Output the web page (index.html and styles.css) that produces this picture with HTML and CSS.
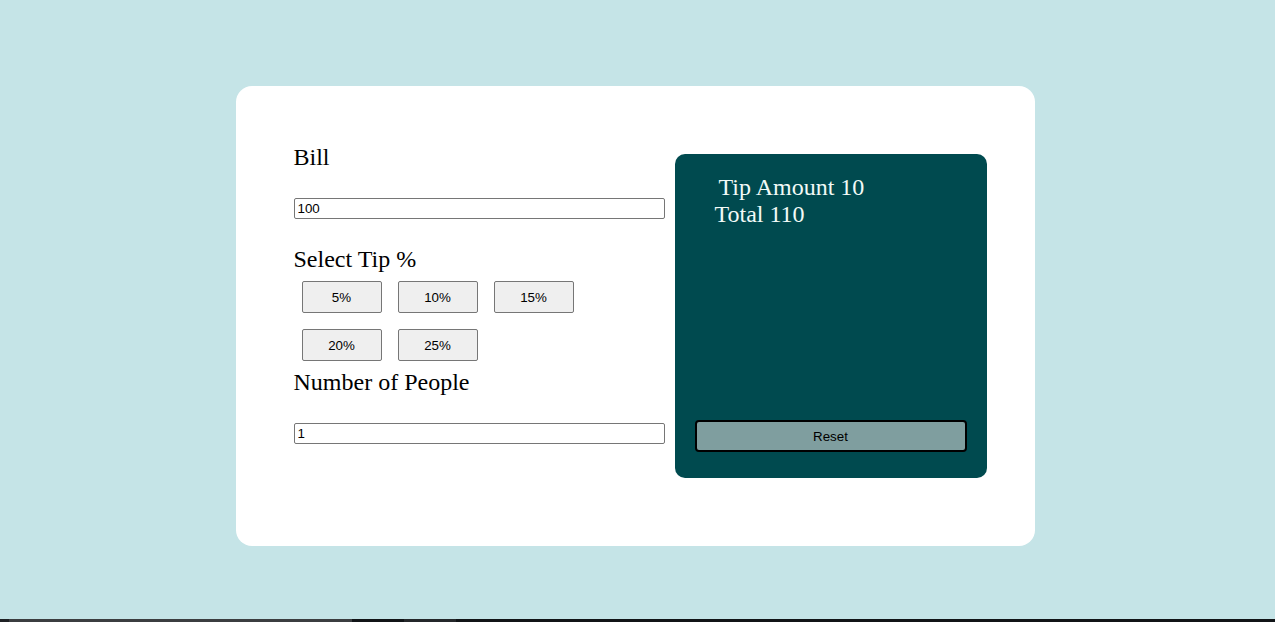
FILE: index.html
```html
<!DOCTYPE html>
<html lang="en">
<head>
<meta charset="utf-8">
<title>Tip Calculator</title>
<link rel="stylesheet" href="styles.css">
</head>
<body>
<div class="page">
  <main class="card">
    <section class="inputs">
      <label class="label" for="bill">Bill</label>
      <input class="field field-bill" id="bill" type="text" value="100">
      <div class="label">Select Tip %</div>
      <div class="tips">
        <button class="tip">5%</button><button class="tip">10%</button><button class="tip">15%</button><br>
        <button class="tip">20%</button><button class="tip">25%</button>
      </div>
      <label class="label" for="people">Number of People</label>
      <input class="field field-people" id="people" type="text" value="1">
    </section>
    <section class="panel">
      <div class="results">
        <div class="row row-tip">Tip Amount 10</div>
        <div class="row">Total 110</div>
      </div>
      <button class="reset">Reset</button>
    </section>
  </main>
</div>
<div class="taskbar"><span class="tb-a"></span><span class="tb-b"></span><span class="tb-c"></span></div>
</body>
</html>
```

FILE: styles.css
```css
html, body {
  margin: 0;
  padding: 0;
}
body {
  background: #c5e4e7;
  font-family: "Liberation Serif", "Times New Roman", serif;
  height: 622px;
  overflow: hidden;
}
.page {
  display: flex;
  justify-content: center;
  padding: 86px 5px 0 0;
}
.card {
  width: 799px;
  height: 460px;
  box-sizing: border-box;
  background: #ffffff;
  border-radius: 16px;
  padding: 58px 48px 0 58px;
  display: flex;
  align-items: flex-start;
  gap: 10px;
}
.inputs {
  width: 371px;
  display: flex;
  flex-direction: column;
  align-items: flex-start;
}
.label {
  display: block;
  font-size: 24px;
  line-height: 27px;
  color: #000;
}
.field {
  width: 371px;
  height: 21px;
  box-sizing: border-box;
  padding: 1px 3px;
  border: 1px solid #767676;
  border-radius: 2px;
  font-family: "Liberation Sans", Arial, sans-serif;
  font-size: 13.33px;
  color: #000;
  background: #fff;
}
.field-bill {
  margin: 27px 0 27px;
}
.field-people {
  margin: 27px 0 0;
}
.tips {
  line-height: 0;
}
.tip {
  width: 80px;
  height: 32px;
  margin: 8px;
  padding: 0;
  background: #efefef;
  border: 1px solid #767676;
  border-radius: 2px;
  font-family: "Liberation Sans", Arial, sans-serif;
  font-size: 13.33px;
  color: #000;
  vertical-align: top;
}
.panel {
  width: 312px;
  height: 324px;
  box-sizing: border-box;
  margin-top: 10px;
  background: #004a4f;
  border-radius: 10px;
  padding: 20px 20px 26px;
  display: flex;
  flex-direction: column;
}
.results {
  padding-left: 20px;
  color: #f2faf7;
  font-size: 24px;
  line-height: 27px;
}
.row-tip {
  padding-left: 4px;
}
.reset {
  margin-top: auto;
  height: 32px;
  width: 100%;
  background: #7f9e9f;
  border: 2px solid #000;
  border-radius: 4px;
  font-family: "Liberation Sans", Arial, sans-serif;
  font-size: 13.33px;
  color: #000;
}
.taskbar {
  position: fixed;
  left: 0;
  right: 0;
  bottom: 0;
  height: 3px;
  background: #111417;
  display: flex;
}
.tb-a {
  width: 9px;
  background: #1e2124;
}
.tb-b {
  width: 343px;
  background: #3b3d40;
}
.tb-c {
  width: 52px;
  margin-left: 52px;
  background: #24272a;
}
```
